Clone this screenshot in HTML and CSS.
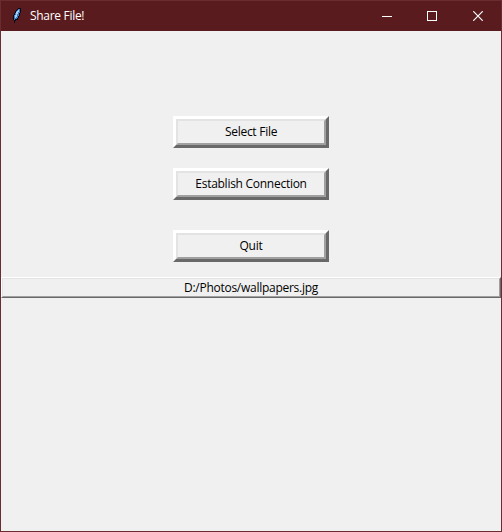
FILE: index.html
```html
<!DOCTYPE html>
<html lang="en">
<head>
<meta charset="utf-8">
<title>Share File!</title>
<link rel="stylesheet" href="styles.css">
</head>
<body>
<div class="window">
  <header class="titlebar">
    <svg class="feather" width="12" height="18" viewBox="0 0 12 18" shape-rendering="crispEdges">
      <path d="M7 1h3v5H9v3H8v2H7v2H5v1H4v2H3v-3H2V8h1V6h1V4h1V3h1V2h1z" fill="#080c16"/>
      <path d="M7 2h2v4H8v3H7v2H6v1H4v1H3V8h1V6h1V4h1V3h1z" fill="#3f7cc4"/>
      <path d="M7 3h1v2H7v2H6v3H5v1H4V8h1V5h1V4h1z" fill="#a9d0f5"/>
    </svg>
    <h1 class="title">Share File!</h1>
    <div class="controls">
      <span class="control minimize"><svg width="10" height="10" shape-rendering="crispEdges"><path d="M0 5.500h10" stroke="#fff"/></svg></span>
      <span class="control"><svg width="10" height="10" shape-rendering="crispEdges"><rect x=".5" y=".5" width="9" height="9" fill="none" stroke="#fff"/></svg></span>
      <span class="control"><svg width="10" height="10"><path d="M.3.3l9.400 9.400M9.700.3.3 9.700" stroke="#fff" stroke-width="1.200"/></svg></span>
    </div>
  </header>
  <main class="content">
    <button class="btn"><span class="face">Select File</span></button>
    <button class="btn"><span class="face">Establish Connection</span></button>
    <button class="btn quit"><span class="face">Quit</span></button>
    <div class="path"><div class="path-face">D:/Photos/wallpapers.jpg</div></div>
  </main>
</div>
</body>
</html>
```
FILE: styles.css
```css
* { box-sizing: border-box; }
body { margin: 0; font: 12px/16px "Open Sans", "Noto Sans", sans-serif; letter-spacing: -0.27px; color: #000; }
.window { width: 502px; height: 532px; border: 1px solid #6b2b30; background: #f0f0f0; }
.titlebar { display: flex; align-items: center; height: 30px; padding-left: 10px; background: #5a1b1e; color: #fff; }
.feather { display: block; flex: none; }
.title { margin: 0 auto 0 7px; font: inherit; letter-spacing: -0.3px; white-space: nowrap; }
.controls { display: flex; }
.control { display: flex; width: 46px; height: 30px; align-items: center; justify-content: center; padding-bottom: 1px; }
.minimize { padding-left: 2px; }
.content { display: flex; flex-direction: column; align-items: center; padding-top: 85px; }
.btn { width: 156px; height: 32px; margin: 0 0 20px; padding: 0; border: 3px solid; border-color: #fff #696969 #696969 #fff; background: #f0f0f0; font: inherit; letter-spacing: inherit; color: inherit; }
.btn.quit { margin: 10px 0 15px; }
.face { display: flex; align-items: center; justify-content: center; height: 26px; border: 2px solid; border-color: #e3e3e3 #a0a0a0 #a0a0a0 #e3e3e3; white-space: nowrap; }
.path { width: 500px; height: 21px; border: 1px solid; border-color: #fff #696969 #696969 #fff; }
.path-face { display: flex; justify-content: center; height: 19px; padding-top: 1px; border: 1px solid; border-color: #e3e3e3 #a0a0a0 #a0a0a0 #e3e3e3; }
```
